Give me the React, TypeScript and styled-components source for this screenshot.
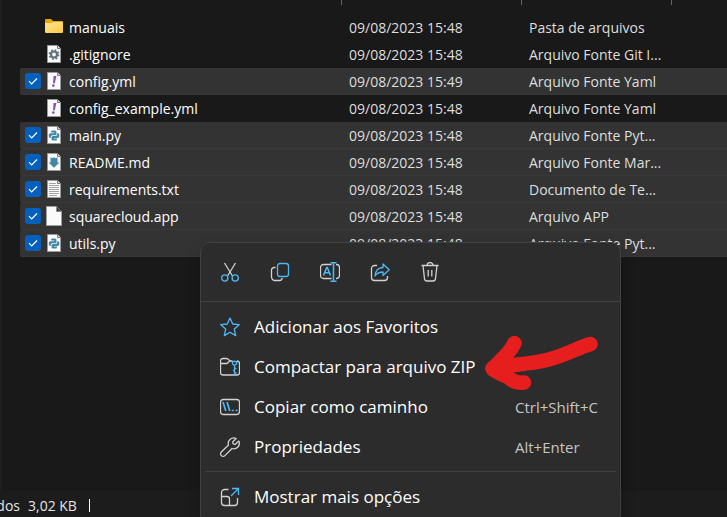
import React, { useState } from "react";
import styled, { createGlobalStyle, css } from "styled-components";

const GlobalStyle = createGlobalStyle`
  *, *::before, *::after { box-sizing: border-box; }
  body {
    margin: 0;
    background: #191919;
    font-family: "Open Sans", "Noto Sans", sans-serif;
    overflow: hidden;
  }
`;

const Explorer = styled.main`
  position: relative;
  display: flex;
  flex-direction: column;
  min-height: 100vh;
  overflow: hidden;
`;

const FilePane = styled.section`
  flex: 1;
  padding-left: 18px;
  border-left: 2px solid #1e1e1e;
  background: #191919;
`;

const FileTable = styled.table`
  width: 100%;
  table-layout: fixed;
  border-collapse: separate;
  border-spacing: 0;
  font-size: 14px;
  line-height: 20px;
  white-space: nowrap;
`;

const HeaderCell = styled.th<{ $width?: number }>`
  width: ${(p) => (p.$width ? `${p.$width}px` : "auto")};
  height: 14px;
  padding: 0;
  vertical-align: top;
`;

const Separator = styled.span`
  display: block;
  height: 5px;
  border-right: 1px solid #636363;
`;

const FileRow = styled.tr<{ $selected: boolean }>`
  height: 27px;

  ${(p) =>
    p.$selected &&
    css`
      & > td {
        background: #333333;
        border-bottom-color: #383838;
      }
      & > td:first-child {
        border-radius: 2px 0 0 2px;
      }
    `}
`;

const Cell = styled.td`
  height: 27px;
  padding: 2px 0 0 7px;
  color: #dedede;
  border-bottom: 1px solid transparent;
`;

const NameCell = styled(Cell)`
  padding: 0 0 0 5px;
  color: #ffffff;
`;

const NameLabel = styled.label`
  display: flex;
  align-items: center;
`;

const FileName = styled.span`
  padding-top: 2px;
`;

const CheckBox = styled.span`
  position: relative;
  display: flex;
  width: 16px;
  height: 16px;
  margin-right: 4px;

  svg {
    position: absolute;
    inset: 0;
    pointer-events: none;
  }
`;

const CheckInput = styled.input`
  appearance: none;
  width: 16px;
  height: 16px;
  margin: 0;
  border-radius: 3px;

  &:checked {
    background: #0560bd;
  }
`;

const FileIcon = styled.span`
  display: flex;
  width: 18px;
  height: 20px;
  margin-right: 6px;
`;

const StatusBar = styled.footer`
  display: flex;
  align-items: center;
  gap: 8px;
  height: 26px;
  padding-bottom: 1px;
  padding-top: 4px;
  background: #1c1c1c;
  color: #e4e4e4;
  font-size: 14px;
  line-height: 20px;
`;

const ClippedStatus = styled.span`
  display: flex;
  justify-content: flex-end;
  width: 20px;
  overflow: hidden;
`;

const StatusDivider = styled.span`
  width: 1px;
  height: 13px;
  margin-left: 4px;
  background: #ffffff;
`;

const Menu = styled.div`
  position: absolute;
  top: 242px;
  left: 200px;
  width: 421px;
  padding-bottom: 3px;
  border: 1px solid #414141;
  border-radius: 10px;
  background: #2c2c2c;
  box-shadow: 0 6px 14px rgba(0, 0, 0, 0.25);
`;

const MenuToolbar = styled.div`
  display: flex;
  gap: 10px;
  height: 59px;
  padding: 9px 9px 0;
  border-bottom: 1px solid #414141;
`;

const ButtonBase = styled.button`
  border: 0;
  background: transparent;
  color: inherit;
  font-family: inherit;

  &:hover {
    background: #383838;
  }
`;

const ToolButton = styled(ButtonBase)`
  display: grid;
  place-items: center;
  width: 40px;
  height: 40px;
  padding: 0;
  border-radius: 4px;
`;

const MenuGroup = styled.div`
  padding: 5px 4px 4px;
`;

const MenuItem = styled(ButtonBase)`
  display: grid;
  grid-template-columns: 20px 1fr 85px;
  align-items: center;
  width: 100%;
  height: 40px;
  padding: 0 16px 0 15px;
  border-radius: 4px;
  color: #ffffff;
  font-size: 17px;
  line-height: 24px;
  text-align: left;
  white-space: nowrap;
`;

const ItemText = styled.span`
  padding-left: 14px;
`;

const Shortcut = styled.span`
  color: #c5c5c5;
  font-size: 15px;
  line-height: 20px;
`;

const MenuDivider = styled.hr`
  height: 1px;
  margin: 0 4px;
  border: 0;
  background: #414141;
`;

const ArrowMark = styled.svg`
  position: absolute;
  top: 330px;
  left: 480px;
  pointer-events: none;
`;

type IconKind = "folder" | "gear" | "yaml" | "python" | "markdown" | "text" | "blank";

const Page = ({ children }: { children?: React.ReactNode }) => (
  <svg width="18" height="20" viewBox="0 0 18 20">
    <path d="M2.5 1.5h10l3 3v14h-13z" fill="#fafafa" stroke="#9a9a9a" />
    <path d="M12.5 1.5v3h3" fill="#dcdcdc" stroke="#777" />
    {children}
  </svg>
);

const KindIcon = ({ kind }: { kind: IconKind }) => {
  switch (kind) {
    case "folder":
      return (
        <svg width="18" height="20" viewBox="0 0 18 20">
          <defs>
            <linearGradient id="folderFront" x1="0" y1="0" x2="1" y2="1">
              <stop offset="0" stopColor="#ffe49a" />
              <stop offset="1" stopColor="#ffca3e" />
            </linearGradient>
          </defs>
          <path d="M0 3q0-1 1-1h5l2 2h9q1 0 1 1v4H0z" fill="#e9a400" />
          <path d="M0 6h6l2-1h9q1 0 1 1v9q0 1-1 1H1q-1 0-1-1z" fill="url(#folderFront)" />
        </svg>
      );
    case "gear":
      return (
        <Page>
          <circle cx="9" cy="10.5" r="3" fill="none" stroke="#5d727c" strokeWidth="2.2" />
          <circle cx="9" cy="10.5" r="4.6" fill="none" stroke="#5d727c" strokeWidth="1.6" strokeDasharray="1.8 1.81" />
        </Page>
      );
    case "yaml":
      return (
        <Page>
          <path d="M8.6 5h2.8l-1.6 7.300H8z" fill="#8c4fb0" />
          <circle cx="8.300" cy="14.6" r="1.3" fill="#8c4fb0" />
        </Page>
      );
    case "python":
      return (
        <Page>
          <path
            d="M7 5.5h3q1.5 0 1.5 1.5v2q0 1.3-1.5 1.3H7.2Q5.7 10.3 5.7 12v.9H5q-1.3 0-1.3-2.3T5.2 8.2h3.9v-.7H6V7q0-1.5 1-1.5z"
            fill="#4587a8"
          />
          <path
            d="M11 15.5H8q-1.5 0-1.5-1.3v-2q0-1.3 1.5-1.3h2.7q1.5 0 1.5-1.6v-1h.8q1.4 0 1.4 2.3T13 12.9H9v.7h3v.6q0 1.3-1 1.3z"
            fill="#4587a8"
          />
        </Page>
      );
    case "markdown":
      return (
        <Page>
          <path d="M5.500 5.3 7.2 6.300 9 5.3l1.8 1 1.700-1v5.2h2L9 15.800 3.500 10.5h2z" fill="#4386a6" />
        </Page>
      );
    case "text":
      return (
        <Page>
          <path d="M4 4.5h7M4 6.5h10M4 8.5h10M4 10.5h10M4 12.5h10M4 14.5h10M4 16.5h8" stroke="#a2a2a2" />
        </Page>
      );
    default:
      return (
        <svg width="18" height="20" viewBox="0 0 18 20">
          <path d="M1.5.5h10l5 5v14h-15z" fill="#fafafa" stroke="#a0a0a0" />
          <path d="M11.500.500v5h5" fill="#3a3a3a" stroke="#888" />
        </svg>
      );
  }
};

const LIGHT = "#d2d2d2";
const BLUE = "#4cb8f5";

type MenuIconKind =
  | "cut" | "copy" | "rename" | "share" | "delete"
  | "star" | "zip" | "path" | "wrench" | "more";

const menuIcons: Record<MenuIconKind, React.ReactNode> = {
  cut: (
    <>
      <path d="m4.500 1 8 13M15.500 1l-8 13" stroke={LIGHT} />
      <circle cx="4.800" cy="16" r="3.100" stroke={BLUE} />
      <circle cx="15.200" cy="16" r="3.100" stroke={BLUE} />
    </>
  ),
  copy: (
    <>
      <path d="M5.500 5.500H4.200A2.700 2.700 0 0 0 1.500 8.200V15a3.500 3.500 0 0 0 3.500 3.500h4.500a2.700 2.700 0 0 0 2.700-2.500" stroke={LIGHT} />
      <rect x="7.500" y="1.500" width="11" height="13" rx="2.500" stroke={BLUE} />
    </>
  ),
  rename: (
    <>
      <path d="M11.500 2.500H3.500a3 3 0 0 0-3 3v8a3 3 0 0 0 3 3h8M16 2.500h.500a3 3 0 0 1 3 3v8a3 3 0 0 1-3 3H16" stroke={LIGHT} />
      <path d="m3.500 13.500 3.200-8h.600l3.200 8M4.700 10.800h4.600M10.500.800h6M10.500 19.200h6M13.500 1v18" stroke={BLUE} strokeWidth="1.600" />
    </>
  ),
  share: (
    <>
      <path d="M7 3.500H4.500a3 3 0 0 0-3 3v9a3 3 0 0 0 3 3h10a3 3 0 0 0 3-3V14" stroke={LIGHT} />
      <path d="M13 2v3.500C8 5.700 5.500 8.500 5 14c2-3 4.500-4 8-4v3.500l6.200-5.700z" stroke={BLUE} />
    </>
  ),
  delete: (
    <>
      <path d="M1.500 3.500h17M7 3.500a3 3 0 0 1 6 0M3 3.500l1.500 13.200q.300 2.300 2.500 2.300h6q2.200 0 2.500-2.300L17 3.500M8.200 8v6.500M11.800 8v6.500" stroke={LIGHT} />
    </>
  ),
  star: (
    <path d="m10 1 2.700 6 6.500.700-4.900 4.400 1.400 6.500L10 15.300l-5.700 3.300 1.400-6.500L.800 7.700 7.300 7z" stroke={BLUE} />
  ),
  zip: (
    <>
      <path d="M12.500 4H10.200L8.100 2.200q-.600-.700-1.600-.700H3A2.500 2.500 0 0 0 .500 4v11.500A2.500 2.500 0 0 0 3 18h14a2.500 2.500 0 0 0 2.500-2.500v-9A2.500 2.500 0 0 0 17 4M1 6.500h6l2.500-2.300" stroke={LIGHT} />
      <path d="M12.500 4v3l2 1.500V18M16.500 4v3l-2 1.500M12.500 4.500h4M14.500 11.500h2M13 13.500h1.500M14.500 16h2" stroke={BLUE} />
    </>
  ),
  path: (
    <>
      <rect x=".500" y="2.500" width="19" height="15" rx="2.800" stroke={LIGHT} />
      <path d="m3 5 2.800 9M7 5l2.800 9M11.800 13.500h2M15.600 13.500h2" stroke={BLUE} strokeWidth="1.700" />
    </>
  ),
  wrench: (
    <path d="M16.200 1.500A5.500 5.500 0 0 0 8.500 8L1.300 15a2.450 2.450 0 0 0 3.600 3.600L12 11.500A5.500 5.500 0 0 0 18.800 4l-3.500 3.300q-1.200.300-2-.500t-.500-2z" stroke={LIGHT} />
  ),
  more: (
    <>
      <path d="M8.500 2.500h-4a3 3 0 0 0-3 3v10a3 3 0 0 0 3 3h10a3 3 0 0 0 3-3V11M1.500 9.500H7A2.500 2.500 0 0 1 9.500 12v6.500" stroke={LIGHT} />
      <path d="M12 1.500h6.500V8M18 2l-7 7" stroke={BLUE} />
    </>
  ),
};

const MenuIcon = ({ kind }: { kind: MenuIconKind }) => (
  <svg width="20" height="20" viewBox="0 0 20 20" fill="none" strokeWidth="1.3" strokeLinejoin="round" aria-hidden="true">
    {menuIcons[kind]}
  </svg>
);

interface FileEntry {
  name: string;
  date: string;
  type: string;
  icon: IconKind;
  selected?: boolean;
}

const initialFiles: FileEntry[] = [
  { name: "manuais", date: "09/08/2023 15:48", type: "Pasta de arquivos", icon: "folder" },
  { name: ".gitignore", date: "09/08/2023 15:48", type: "Arquivo Fonte Git I...", icon: "gear" },
  { name: "config.yml", date: "09/08/2023 15:49", type: "Arquivo Fonte Yaml", icon: "yaml", selected: true },
  { name: "config_example.yml", date: "09/08/2023 15:48", type: "Arquivo Fonte Yaml", icon: "yaml" },
  { name: "main.py", date: "09/08/2023 15:48", type: "Arquivo Fonte Pyt...", icon: "python", selected: true },
  { name: "README.md", date: "09/08/2023 15:48", type: "Arquivo Fonte Mar...", icon: "markdown", selected: true },
  { name: "requirements.txt", date: "09/08/2023 15:48", type: "Documento de Te...", icon: "text", selected: true },
  { name: "squarecloud.app", date: "09/08/2023 15:48", type: "Arquivo APP", icon: "blank", selected: true },
  { name: "utils.py", date: "09/08/2023 15:48", type: "Arquivo Fonte Pyt...", icon: "python", selected: true },
];

const tools: { icon: MenuIconKind; label: string }[] = [
  { icon: "cut", label: "Recortar" },
  { icon: "copy", label: "Copiar" },
  { icon: "rename", label: "Renomear" },
  { icon: "share", label: "Compartilhar" },
  { icon: "delete", label: "Excluir" },
];

const actions: { icon: MenuIconKind; label: string; shortcut?: string }[] = [
  { icon: "star", label: "Adicionar aos Favoritos" },
  { icon: "zip", label: "Compactar para arquivo ZIP" },
  { icon: "path", label: "Copiar como caminho", shortcut: "Ctrl+Shift+C" },
  { icon: "wrench", label: "Propriedades", shortcut: "Alt+Enter" },
];

export default function App() {
  const [files, setFiles] = useState(initialFiles);
  const toggle = (name: string) =>
    setFiles((list) => list.map((f) => (f.name === name ? { ...f, selected: !f.selected } : f)));

  return (
    <>
      <GlobalStyle />
      <Explorer>
        <FilePane>
          <FileTable>
            <thead>
              <tr>
                <HeaderCell $width={322} aria-label="Nome"><Separator /></HeaderCell>
                <HeaderCell $width={180} aria-label="Data de modificação"><Separator /></HeaderCell>
                <HeaderCell $width={150} aria-label="Tipo"><Separator /></HeaderCell>
                <HeaderCell aria-label="Tamanho" />
              </tr>
            </thead>
            <tbody>
              {files.map((file) => (
                <FileRow key={file.name} $selected={!!file.selected}>
                  <NameCell>
                    <NameLabel>
                      <CheckBox>
                        <CheckInput type="checkbox" checked={!!file.selected} onChange={() => toggle(file.name)} />
                        {file.selected && (
                          <svg width="16" height="16" viewBox="0 0 16 16" fill="none" stroke="#fff" strokeWidth="1.2">
                            <path d="m4 8.200 2.700 2.700L12 5.500" />
                          </svg>
                        )}
                      </CheckBox>
                      <FileIcon><KindIcon kind={file.icon} /></FileIcon>
                      <FileName>{file.name}</FileName>
                    </NameLabel>
                  </NameCell>
                  <Cell>{file.date}</Cell>
                  <Cell>{file.type}</Cell>
                  <Cell />
                </FileRow>
              ))}
            </tbody>
          </FileTable>
        </FilePane>

        <StatusBar>
          <ClippedStatus>dos</ClippedStatus>
          <span>3,02 KB</span>
          <StatusDivider />
        </StatusBar>

        <Menu>
          <MenuToolbar>
            {tools.map((tool) => (
              <ToolButton key={tool.icon} type="button" aria-label={tool.label}>
                <MenuIcon kind={tool.icon} />
              </ToolButton>
            ))}
          </MenuToolbar>
          <MenuGroup>
            {actions.map((action) => (
              <MenuItem key={action.icon} type="button">
                <MenuIcon kind={action.icon} />
                <ItemText>{action.label}</ItemText>
                {action.shortcut && <Shortcut>{action.shortcut}</Shortcut>}
              </MenuItem>
            ))}
          </MenuGroup>
          <MenuDivider />
          <MenuGroup>
            <MenuItem type="button">
              <MenuIcon kind="more" />
              <ItemText>Mostrar mais opções</ItemText>
            </MenuItem>
          </MenuGroup>
        </Menu>

        <ArrowMark
          width="124"
          height="66"
          viewBox="0 0 124 66"
          fill="none"
          stroke="#e61e1e"
          strokeWidth="14.500"
          strokeLinecap="round"
          strokeLinejoin="round"
          aria-hidden="true"
        >
          <path d="M110.500 14C97 18 87 25 67 30 50 34 34 34.500 18 37.500" />
          <path d="M34.500 13C30 23 22 29 12.500 38.500 15 43 28 46 31 49.500Q37 53.500 44 52.500" />
          <path d="M13 39 26 33v10z" fill="#e61e1e" />
        </ArrowMark>
      </Explorer>
    </>
  );
}
